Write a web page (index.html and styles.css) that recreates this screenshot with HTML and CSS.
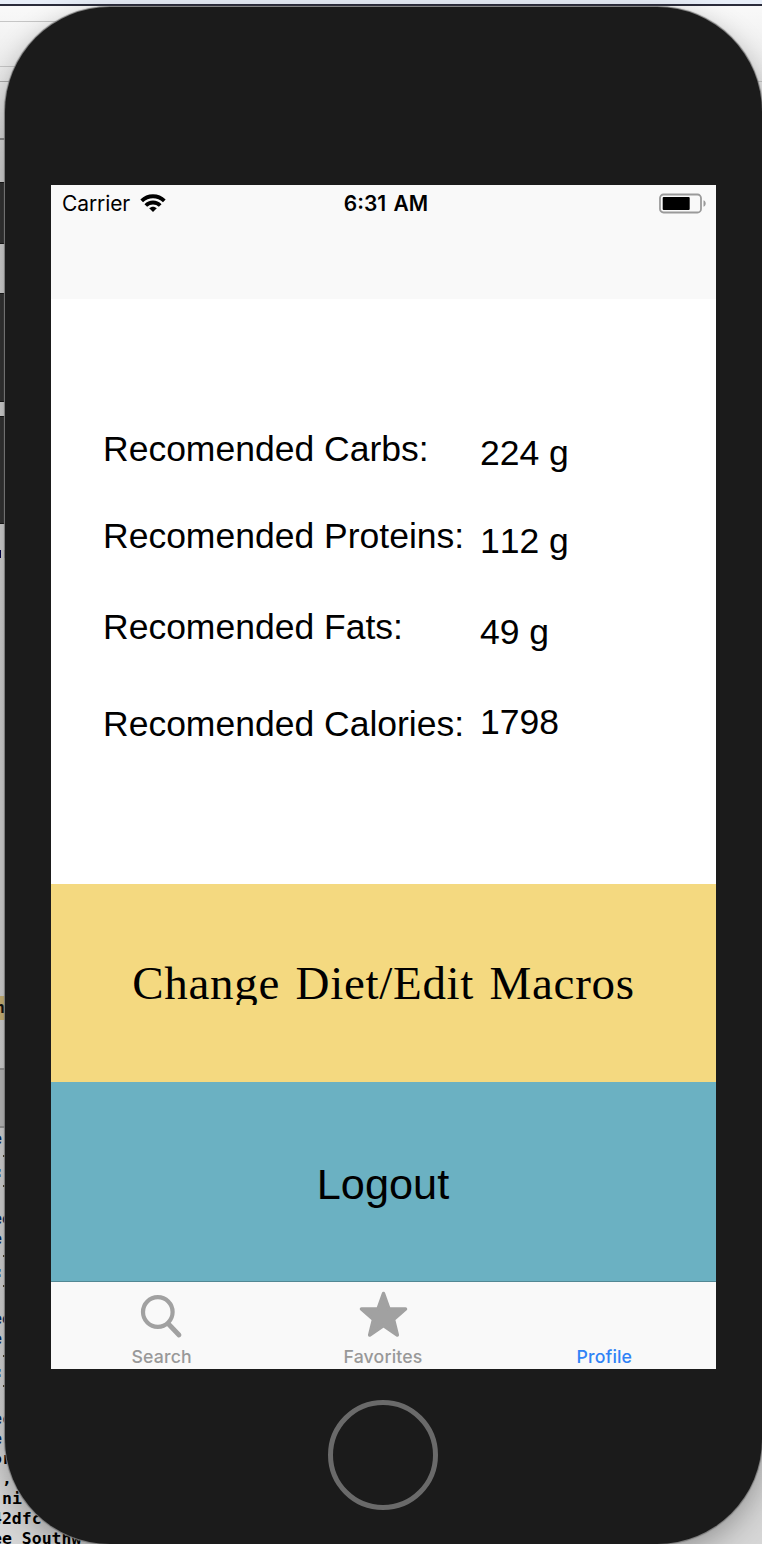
FILE: index.html
```html
<!DOCTYPE html>
<html lang="en">
  <head>
    <meta charset="UTF-8" />
    <meta name="viewport" content="width=device-width, initial-scale=1.0" />
    <title>Profile</title>
    <link rel="stylesheet" href="styles.css" />
  </head>
  <body>
    <!-- desktop windows behind the simulator -->
    <svg class="desktop" width="762" height="1544" viewBox="0 0 762 1544">
      <defs>
        <linearGradient id="wall" x1="0" y1="0" x2="0" y2="1">
          <stop offset="0" stop-color="#fafafa" />
          <stop offset="0.05" stop-color="#ebebeb" />
          <stop offset="0.11" stop-color="#d2d2d2" />
          <stop offset="1" stop-color="#d6d6d6" />
        </linearGradient>
      </defs>
      <rect width="762" height="1544" fill="url(#wall)" />
      <rect width="762" height="4" fill="#e8eef8" />
      <rect y="4" width="762" height="2" fill="#2b2c3b" />
      <g fill="#c6c6c6">
        <rect y="21" width="60" height="1" />
        <rect y="66" width="20" height="1" />
        <rect y="81" width="10" height="1" fill="#aaa" />
        <rect y="138" width="6" height="2" fill="#8c8c8c" />
        <rect x="755" y="81" width="7" height="1" />
      </g>
      <g fill="#333" stroke="#161616">
        <rect x="-2" y="182.500" width="12" height="61" />
        <rect x="-2" y="293.500" width="12" height="108" />
        <rect x="-2" y="416.500" width="12" height="107" />
      </g>
      <rect y="996" width="10" height="24" fill="#cdb678" />
      <rect y="1069" width="10" height="58" fill="#bcbcbc" />
      <rect y="1068" width="10" height="2" fill="#999" />
      <rect y="1126" width="10" height="2" fill="#999" />
      <rect y="550" width="1" height="8" fill="#00004a" />
      <rect x="4" y="550" width="1" height="8" fill="#6b4a40" />
      <g class="console" fill="#06275a">
        <text x="-5" y="1013" fill="#111">h</text>
        <text x="-8" y="1144">e</text>
        <text x="-6" y="1177">:</text>
        <text x="-8" y="1224">ee</text>
        <text x="-8" y="1244">e</text>
        <text x="-6" y="1277">:</text>
        <text x="-8" y="1324">ee</text>
        <text x="-8" y="1344">e</text>
        <text x="-6" y="1377">:</text>
        <text x="-8" y="1424">ec</text>
        <text x="-8" y="1444">e</text>
      </g>
      <g fill="#4a3a20">
        <rect x="3" y="1155" width="2" height="2" />
        <rect x="3" y="1185" width="2" height="2" />
        <rect x="3" y="1255" width="2" height="2" />
        <rect x="3" y="1285" width="2" height="2" />
        <rect x="3" y="1355" width="2" height="2" />
        <rect x="3" y="1385" width="2" height="2" />
      </g>
      <g class="console">
        <text x="-8" y="1464">or</text>
        <text x="-8" y="1484">.,</text>
        <text x="2" y="1504">ni</text>
        <text x="-8" y="1524">42dfc</text>
        <text x="-8" y="1544">ee Southw</text>
      </g>
    </svg>

    <div class="phone">
      <div class="screen">
        <header class="nav-bar">
          <div class="status-bar">
            <div class="carrier">
              <span>Carrier</span>
              <svg width="26" height="19" viewBox="0 0 26 19">
                <g fill="none" stroke="#000" stroke-width="3.800">
                  <path d="M1.700 6.900C8 0.700 18 0.700 24.300 6.900" />
                  <path d="M5.800 11.500C9.900 7.500 16.100 7.500 20.200 11.500" />
                </g>
                <path d="M9.200 14.200C11.400 12.100 14.600 12.100 16.800 14.200L13 18Z" />
              </svg>
            </div>
            <span class="time">6:31 AM</span>
            <svg class="battery" width="48" height="22" viewBox="0 0 48 22">
              <rect x="1" y="1.500" width="41" height="18" rx="3.500" fill="none" stroke="#9a9a9a" stroke-width="1.800" />
              <rect x="3.700" y="4" width="27" height="13" rx="1" />
              <path d="M44.500 7.200C47.400 8.200 47.400 12.800 44.500 13.800Z" fill="#9a9a9a" />
            </svg>
          </div>
        </header>

        <main class="macros">
          <div class="macro-row carbs">
            <span class="label">Recomended Carbs:</span>
            <span class="value">224 g</span>
          </div>
          <div class="macro-row proteins">
            <span class="label">Recomended Proteins:</span>
            <span class="value">112 g</span>
          </div>
          <div class="macro-row fats">
            <span class="label">Recomended Fats:</span>
            <span class="value">49 g</span>
          </div>
          <div class="macro-row calories">
            <span class="label">Recomended Calories:</span>
            <span class="value">1798</span>
          </div>
        </main>

        <button class="edit-btn"><span>Change Diet/Edit Macros</span></button>
        <button class="logout-btn"><span>Logout</span></button>

        <nav class="tab-bar">
          <div class="tab">
            <svg width="50" height="50" viewBox="0 0 50 50">
              <circle cx="20.800" cy="22" r="14.800" fill="none" stroke="#a1a1a1" stroke-width="4.200" />
              <path d="M31.500 34L42 45" stroke="#a1a1a1" stroke-width="4.800" stroke-linecap="round" />
            </svg>
            <span>Search</span>
          </div>
          <div class="tab">
            <svg width="50" height="50" viewBox="0 0 50 50">
              <path d="M25.500 3.500L31 19H47.500L35.500 29.500L39.300 45L25.500 35.500L11.700 45L15.500 29.500L3.500 19H20Z" fill="#a1a1a1" stroke="#a1a1a1" stroke-width="3.500" stroke-linejoin="round" />
            </svg>
            <span>Favorites</span>
          </div>
          <div class="tab active">
            <span>Profile</span>
          </div>
        </nav>
      </div>
      <div class="home-btn"></div>
    </div>
  </body>
</html>
```
FILE: styles.css
```css
* {
  box-sizing: border-box;
}
body {
  margin: 0;
  height: 1544px;
  overflow: hidden;
  font-family: "Liberation Sans", Arial, sans-serif;
  color: #000;
}
.desktop {
  position: absolute;
  top: 0;
  left: 0;
}
.console {
  font-family: "DejaVu Sans Mono", monospace;
  font-size: 16.5px;
  font-weight: bold;
}
.phone {
  position: relative;
  width: 757px;
  height: 1537px;
  margin: 7px 0 0 5px;
  padding: 178px 46px 0;
  background-color: #1b1b1b;
  border-radius: 105px;
  box-shadow: 0 0 1px 1px #777, 0 10px 30px rgba(0, 0, 0, 0.3);
}
.screen {
  display: flex;
  flex-direction: column;
  width: 665px;
  height: 1184px;
  background-color: white;
}
.nav-bar {
  height: 114px;
  background-color: #f9f9f9;
  font-family: Inter, sans-serif;
  font-size: 21px;
}
.status-bar {
  display: grid;
  grid-template-columns: 1fr auto 1fr;
  align-items: center;
  height: 37px;
  padding: 0 9px 0 11px;
}
.carrier {
  display: flex;
  align-items: center;
  gap: 10px;
  letter-spacing: -0.1px;
}
.time {
  padding-left: 3px;
  font-weight: 600;
  word-spacing: 2px;
}
.battery {
  justify-self: end;
}
.macros {
  height: 585px;
  padding: 130px 0 0 52px;
  font-size: 35.5px;
  line-height: 40px;
  font-kerning: none;
}
.macro-row {
  display: flex;
  height: 40px;
}
.label {
  width: 377px;
  white-space: nowrap;
}
.value {
  margin-top: 4px;
}
.proteins {
  margin-top: 47px;
}
.fats {
  margin-top: 51px;
}
.calories {
  margin-top: 57px;
}
.proteins .value,
.fats .value {
  margin-top: 5px;
}
.calories .value {
  margin-top: -2px;
}
.edit-btn,
.logout-btn {
  display: flex;
  justify-content: center;
  border: none;
  padding: 0;
  color: #000;
  white-space: nowrap;
}
.edit-btn {
  height: 198px;
  padding-top: 70px;
  background-color: #f4d980;
  font-family: "Liberation Serif", "Times New Roman", serif;
  font-size: 47px;
  letter-spacing: 0.7px;
  word-spacing: 3px;
}
/* descenders are cut at the title height */
.edit-btn span {
  height: 51px;
  line-height: 58px;
  overflow: hidden;
}
.logout-btn {
  height: 199px;
  padding-top: 76px;
  background-color: #6bb1c2;
  font-family: "Liberation Sans", Arial, sans-serif;
  font-size: 43.3px;
  line-height: 52px;
}
.logout-btn span {
  margin-right: 1px;
}
.tab-bar {
  display: flex;
  height: 88px;
  padding-right: 1px;
  border-top: 1px solid #528894;
  background-color: #f9f9f9;
  font-family: Inter, sans-serif;
  font-size: 17.7px;
  font-weight: 500;
  line-height: 24px;
  letter-spacing: 0.15px;
  color: #989898;
}
.tab {
  display: flex;
  flex: 1;
  flex-direction: column;
  justify-content: flex-end;
  align-items: center;
}
.tab svg {
  margin-bottom: 5px;
}
.tab.active {
  color: #2f82f6;
}
.home-btn {
  width: 110px;
  height: 110px;
  margin: 31px 0 0 277px;
  border: 5px solid #6a6a6a;
  border-radius: 50%;
}
```
